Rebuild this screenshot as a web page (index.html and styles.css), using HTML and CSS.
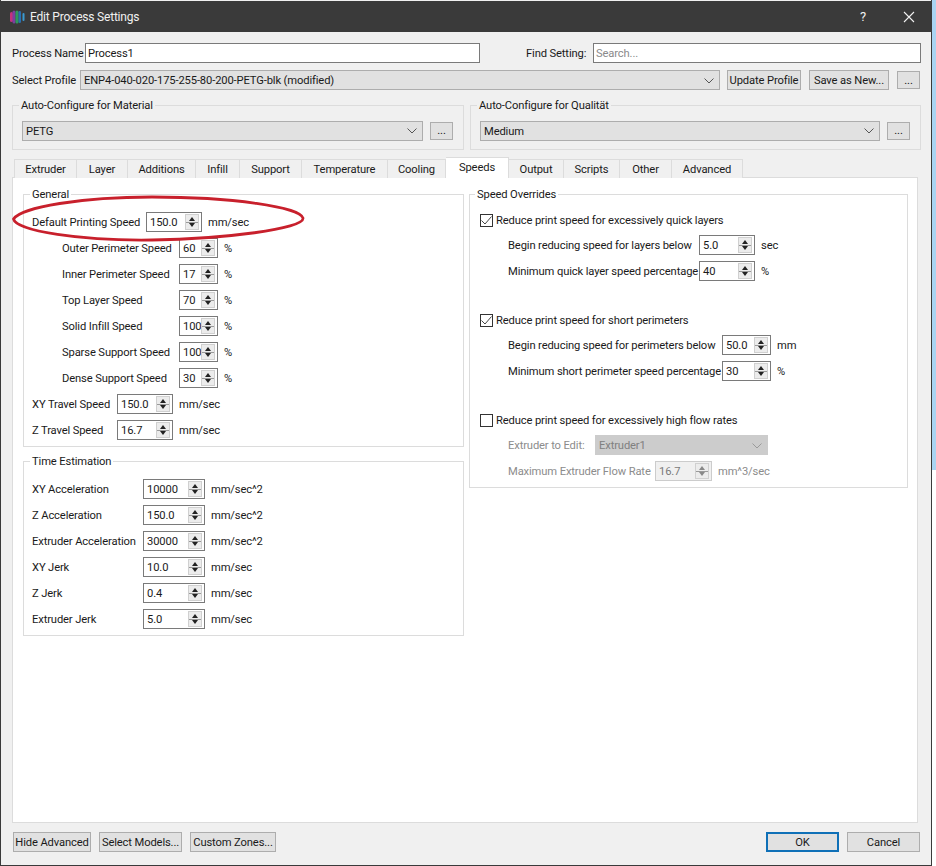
FILE: index.html
```html
<!DOCTYPE html>
<html lang="en">
<head>
    <meta charset="UTF-8">
    <meta name="viewport" content="width=device-width, initial-scale=1.0">
    <title>Edit Process Settings</title>
    <link rel="stylesheet" href="styles.css">
</head>
<body>
    <div class="window">
        <!-- Title bar -->
        <div class="titlebar">
            <svg class="app-icon" width="15" height="14" viewBox="0 0 15 14">
                <rect x="0" y="2" width="3" height="10" rx="1.5" fill="#c2337c"/>
                <rect x="2.5" y="0.5" width="3" height="13" rx="1.5" fill="#7a3fa0"/>
                <rect x="5.5" y="0.5" width="3" height="13" rx="1.5" fill="#2e9a5a"/>
                <rect x="8.5" y="1" width="2.5" height="12" rx="1.2" fill="#2a6fb0"/>
                <rect x="12.5" y="3" width="2" height="8" rx="1" fill="#3a9ad0"/>
            </svg>
            <span class="title">Edit Process Settings</span>
            <span class="help">?</span>
            <svg class="close" width="12" height="12" viewBox="0 0 12 12">
                <path d="M1 1 L11 11 M11 1 L1 11" stroke="#f2f2f2" stroke-width="1.1" fill="none"/>
            </svg>
        </div>

        <div class="client">
            <div class="top-row">
                <label class="name-label">Process Name</label>
                <div class="field name-field">Process1</div>
                <label class="find-label">Find Setting:</label>
                <div class="field find-field">Search...</div>
            </div>

            <div class="profile-row">
                <label class="profile-label">Select Profile</label>
                <div class="combo profile-combo">
                    <span>ENP4-040-020-175-255-80-200-PETG-blk (modified)</span>
                    <svg class="chev" width="10" height="6" viewBox="0 0 10 6"><path d="M0.5 0.5 L5 5 L9.5 0.5" stroke="#555" fill="none"/></svg>
                </div>
                <button class="btn update-btn">Update Profile</button>
                <button class="btn save-btn">Save as New...</button>
                <button class="btn dots">...</button>
            </div>

            <div class="auto-row">
                <fieldset class="group auto-group auto-material">
                    <legend>Auto-Configure for Material</legend>
                    <div class="combo auto-combo">
                        <span>PETG</span>
                        <svg class="chev" width="10" height="6" viewBox="0 0 10 6"><path d="M0.5 0.5 L5 5 L9.5 0.5" stroke="#555" fill="none"/></svg>
                    </div>
                    <button class="btn dots">...</button>
                </fieldset>
                <fieldset class="group auto-group auto-quality">
                    <legend>Auto-Configure for Qualität</legend>
                    <div class="combo auto-combo">
                        <span>Medium</span>
                        <svg class="chev" width="10" height="6" viewBox="0 0 10 6"><path d="M0.5 0.5 L5 5 L9.5 0.5" stroke="#555" fill="none"/></svg>
                    </div>
                    <button class="btn dots">...</button>
                </fieldset>
            </div>

            <div class="tabs">
                <div class="tab tab-extruder">Extruder</div>
                <div class="tab tab-layer">Layer</div>
                <div class="tab tab-additions">Additions</div>
                <div class="tab tab-infill">Infill</div>
                <div class="tab tab-support">Support</div>
                <div class="tab tab-temperature">Temperature</div>
                <div class="tab tab-cooling">Cooling</div>
                <div class="tab tab-speeds active">Speeds</div>
                <div class="tab tab-output">Output</div>
                <div class="tab tab-scripts">Scripts</div>
                <div class="tab tab-other">Other</div>
                <div class="tab tab-advanced">Advanced</div>
            </div>

            <div class="pane">
                <div class="col col-left">
                    <fieldset class="group general">
                        <legend>General</legend>
                        <div class="row first"><label class="w114">Default Printing Speed</label><div class="spin s56"><span>150.0</span><i class="arrows"></i></div><span class="unit">mm/sec</span></div>
                        <div class="row indent"><label class="w117">Outer Perimeter Speed</label><div class="spin s39"><span>60</span><i class="arrows"></i></div><span class="unit">%</span></div>
                        <div class="row indent"><label class="w117">Inner Perimeter Speed</label><div class="spin s39"><span>17</span><i class="arrows"></i></div><span class="unit">%</span></div>
                        <div class="row indent"><label class="w117">Top Layer Speed</label><div class="spin s39"><span>70</span><i class="arrows"></i></div><span class="unit">%</span></div>
                        <div class="row indent"><label class="w117">Solid Infill Speed</label><div class="spin s39"><span>100</span><i class="arrows"></i></div><span class="unit">%</span></div>
                        <div class="row indent"><label class="w117">Sparse Support Speed</label><div class="spin s39"><span>100</span><i class="arrows"></i></div><span class="unit">%</span></div>
                        <div class="row indent"><label class="w117">Dense Support Speed</label><div class="spin s39"><span>30</span><i class="arrows"></i></div><span class="unit">%</span></div>
                        <div class="row"><label class="w85">XY Travel Speed</label><div class="spin s56"><span>150.0</span><i class="arrows"></i></div><span class="unit">mm/sec</span></div>
                        <div class="row"><label class="w85">Z Travel Speed</label><div class="spin s56"><span>16.7</span><i class="arrows"></i></div><span class="unit">mm/sec</span></div>
                    </fieldset>

                    <fieldset class="group time">
                        <legend>Time Estimation</legend>
                        <div class="row first"><label class="w111">XY Acceleration</label><div class="spin s62"><span>10000</span><i class="arrows"></i></div><span class="unit">mm/sec^2</span></div>
                        <div class="row"><label class="w111">Z Acceleration</label><div class="spin s62"><span>150.0</span><i class="arrows"></i></div><span class="unit">mm/sec^2</span></div>
                        <div class="row"><label class="w111">Extruder Acceleration</label><div class="spin s62"><span>30000</span><i class="arrows"></i></div><span class="unit">mm/sec^2</span></div>
                        <div class="row"><label class="w111">XY Jerk</label><div class="spin s62"><span>10.0</span><i class="arrows"></i></div><span class="unit">mm/sec</span></div>
                        <div class="row"><label class="w111">Z Jerk</label><div class="spin s62"><span>0.4</span><i class="arrows"></i></div><span class="unit">mm/sec</span></div>
                        <div class="row"><label class="w111">Extruder Jerk</label><div class="spin s62"><span>5.0</span><i class="arrows"></i></div><span class="unit">mm/sec</span></div>
                    </fieldset>
                </div>

                <div class="col col-right">
                    <fieldset class="group overrides">
                        <legend>Speed Overrides</legend>

                        <div class="check-row first">
                            <span class="check on"><svg width="11" height="9" viewBox="0 0 11 9"><path d="M0.5 4.5 L4 8 L10.5 0.5" stroke="#444" fill="none"/></svg></span>
                            <label>Reduce print speed for excessively quick layers</label>
                        </div>
                        <div class="row sub"><label class="w191">Begin reducing speed for layers below</label><div class="spin s56"><span>5.0</span><i class="arrows"></i></div><span class="unit">sec</span></div>
                        <div class="row sub"><label class="w191">Minimum quick layer speed percentage</label><div class="spin s56"><span>40</span><i class="arrows"></i></div><span class="unit">%</span></div>

                        <div class="check-row">
                            <span class="check on"><svg width="11" height="9" viewBox="0 0 11 9"><path d="M0.5 4.5 L4 8 L10.5 0.5" stroke="#444" fill="none"/></svg></span>
                            <label>Reduce print speed for short perimeters</label>
                        </div>
                        <div class="row sub"><label class="w214">Begin reducing speed for perimeters below</label><div class="spin s49"><span>50.0</span><i class="arrows"></i></div><span class="unit">mm</span></div>
                        <div class="row sub"><label class="w214">Minimum short perimeter speed percentage</label><div class="spin s49"><span>30</span><i class="arrows"></i></div><span class="unit">%</span></div>

                        <div class="check-row">
                            <span class="check"></span>
                            <label>Reduce print speed for excessively high flow rates</label>
                        </div>
                        <div class="row sub off">
                            <label class="w87">Extruder to Edit:</label>
                            <div class="combo disabled-combo">
                                <span>Extruder1</span>
                                <svg class="chev" width="10" height="6" viewBox="0 0 10 6"><path d="M0.5 0.5 L5 5 L9.5 0.5" stroke="#9a9a9a" fill="none"/></svg>
                            </div>
                        </div>
                        <div class="row sub off"><label class="w147">Maximum Extruder Flow Rate</label><div class="spin s57 disabled"><span>16.7</span><i class="arrows"></i></div><span class="unit">mm^3/sec</span></div>
                    </fieldset>
                </div>
            </div>

            <div class="bottom-row">
                <button class="btn hide-btn">Hide Advanced</button>
                <button class="btn models-btn">Select Models...</button>
                <button class="btn zones-btn">Custom Zones...</button>
                <button class="btn ok-btn">OK</button>
                <button class="btn cancel-btn">Cancel</button>
            </div>
        </div>

        <!-- Red hand drawn ellipse on top of the first row -->
        <svg class="scribble" width="296" height="50" viewBox="0 0 296 50">
            <path d="M1.5 24 C10 12 70 2 140 2 C220 2 288 12 291 23 C293 34 210 44 140 45 C70 46 4 36 1.5 24 Z" fill="none" stroke="#c8202c" stroke-width="2.8"/>
        </svg>
    </div>
</body>
</html>
```

FILE: styles.css
```css
* {
    box-sizing: border-box;
}
html, body {
    margin: 0;
    padding: 0;
}
body {
    width: 936px;
    height: 866px;
    overflow: hidden;
    background: linear-gradient(#a9d4f2 0, #a9d4f2 470px, #ffffff 470px);
    font-family: Roboto, "Liberation Sans", sans-serif;
    font-size: 11.2px;
    letter-spacing: -0.13px;
    color: #1a1a1a;
    white-space: nowrap;
}
.window {
    position: relative;
    width: 932px;
    height: 866px;
    padding-top: 1px;
    border-right: 1px solid #3a3a3a;
    border-left: 1px solid #3a3a3a;
    border-bottom: 1px solid #3a3a3a;
    background: #f0f0f0;
}
.titlebar {
    display: flex;
    align-items: center;
    height: 31px;
    margin: 0 -1px;
    padding: 0 17px 0 10px;
    background: #3a3a3a;
    color: #f0f0f0;
    font-size: 12px;
    letter-spacing: -0.2px;
}
.app-icon {
    margin-right: 5px;
}
.title {
    flex: 1;
}
.help {
    margin-right: 37px;
    font-size: 13px;
}
.client {
    padding: 11px 0 0 11px;
}

/* fields and buttons */
.field {
    height: 20px;
    padding: 0 2px;
    line-height: 20px;
    background: #fff;
    border: 1px solid #7a7a7a;
}
.combo {
    display: flex;
    align-items: center;
    justify-content: space-between;
    height: 20px;
    padding: 1px 5px 0 3px;
    background: #e1e1e1;
    border: 1px solid #adadad;
}
.btn {
    height: 20px;
    padding: 1px 0 0;
    font: inherit;
    letter-spacing: inherit;
    color: inherit;
    background: #e1e1e1;
    border: 1px solid #adadad;
}
.dots {
    width: 23px;
    height: 18px;
    line-height: 12px;
}

/* top rows */
.top-row {
    display: flex;
    align-items: center;
}
.top-row label,
.profile-row label {
    padding-top: 1px;
}
.name-label {
    width: 73px;
}
.name-field {
    width: 395px;
}
.find-label {
    width: 67px;
    margin-left: 46px;
}
.find-field {
    width: 328px;
    color: #8a8a8a;
}
.profile-row {
    display: flex;
    align-items: center;
    margin-top: 7px;
}
.profile-label {
    width: 68px;
}
.profile-combo {
    width: 640px;
    margin-right: 7px;
}
.update-btn {
    width: 74px;
    margin-right: 8px;
}
.save-btn {
    width: 80px;
    margin-right: 8px;
}

/* group boxes */
.group {
    margin: 0;
    padding: 0;
    min-width: 0;
    border: 1px solid #dcdcdc;
}
.group legend {
    padding: 0 2px;
    line-height: 14px;
    transform: translateY(1px);
}
.auto-row {
    display: flex;
    margin-top: 8px;
}
.auto-group {
    display: flex;
    align-items: center;
    height: 52px;
    padding: 0 10px 0 9px;
}
.auto-group legend {
    margin-left: -3px;
}
.auto-material {
    width: 452px;
    margin-right: 6px;
}
.auto-quality {
    width: 451px;
}
.auto-combo {
    flex: 1;
    margin-right: 7px;
}

/* tabs */
.tabs {
    position: relative;
    display: flex;
    align-items: flex-end;
    height: 21px;
    margin: 7px 0 -1px 2px;
}
.tab {
    height: 19px;
    line-height: 19px;
    text-align: center;
    background: #f0f0f0;
    border: 1px solid #dcdcdc;
    border-bottom: none;
    border-left: none;
}
.tab-extruder { width: 63px; border-left: 1px solid #dcdcdc; }
.tab-layer { width: 51px; }
.tab-additions { width: 68px; }
.tab-infill { width: 44px; }
.tab-support { width: 62px; }
.tab-temperature { width: 86px; }
.tab-cooling { width: 58px; }
.tab-speeds { width: 63px; }
.tab-output { width: 55px; }
.tab-scripts { width: 56px; }
.tab-other { width: 52px; }
.tab-advanced { width: 71px; }
.tab.active {
    position: relative;
    z-index: 1;
    height: 21px;
    background: #fff;
}
.pane {
    display: flex;
    width: 906px;
    height: 646px;
    padding: 9px 0 0 10px;
    background: #fff;
    border: 1px solid #dcdcdc;
}
.col-left {
    width: 441px;
    margin-right: 5px;
}
.col-right {
    width: 439px;
}
.general {
    height: 260px;
    padding: 0 0 0 8px;
}
.time {
    height: 182px;
    margin-top: 7px;
    padding: 0 0 0 8px;
}
.general legend,
.time legend {
    margin-left: -2px;
}
.overrides {
    height: 301px;
    padding: 0 0 0 10px;
}
.overrides legend {
    margin-left: -5px;
}

/* form rows */
.row {
    display: flex;
    align-items: center;
    height: 20px;
    margin-top: 6px;
}
.row.first {
    margin-top: 11px;
}
.check-row + .row {
    margin-top: 8px;
}
.indent {
    padding-left: 30px;
}
.sub {
    padding-left: 28px;
}
.off {
    color: #8c8c8c;
}
.row label {
    flex-shrink: 0;
}
.w85 { width: 85px; }
.w87 { width: 87px; }
.w111 { width: 111px; }
.w114 { width: 114px; }
.w117 { width: 117px; }
.w147 { width: 147px; }
.w191 { width: 191px; }
.w214 { width: 214px; }
.unit {
    margin-left: 6px;
}
.spin {
    position: relative;
    flex-shrink: 0;
    height: 20px;
    padding-left: 3px;
    line-height: 19px;
    background: #fff;
    border: 1px solid #7a7a7a;
}
.s39 { width: 39px; }
.s49 { width: 49px; }
.s56 { width: 56px; }
.s57 { width: 57px; }
.s62 { width: 62px; }
.arrows {
    position: absolute;
    top: 1px;
    right: 2px;
    bottom: 1px;
    width: 14px;
    background: linear-gradient(#ececec 7px, #9a9a9a 7px, #9a9a9a 8px, #ececec 8px);
    border: 1px solid #d0d0d0;
}
.arrows::before,
.arrows::after {
    content: "";
    position: absolute;
    left: 3px;
    border-left: 3px solid transparent;
    border-right: 3px solid transparent;
}
.arrows::before {
    top: 2px;
    border-bottom: 4px solid #222;
}
.arrows::after {
    bottom: 2px;
    border-top: 4px solid #222;
}
.spin.disabled {
    color: #7a7a7a;
    background: #f0f0f0;
    border-color: #cccccc;
}
.spin.disabled .arrows::before {
    border-bottom-color: #888;
}
.spin.disabled .arrows::after {
    border-top-color: #888;
}
.disabled-combo {
    width: 173px;
    background: #cccccc;
    border-color: #cccccc;
    color: #808080;
}
.check-row {
    display: flex;
    align-items: center;
    height: 14px;
    margin-top: 32px;
}
.check-row.first {
    margin-top: 12px;
}
.check {
    display: flex;
    align-items: center;
    justify-content: center;
    width: 13px;
    height: 13px;
    margin-right: 3px;
    background: #fff;
    border: 1px solid #333;
}

/* bottom buttons */
.bottom-row {
    display: flex;
    margin-top: 9px;
    padding-left: 1px;
}
.hide-btn { width: 78px; margin-right: 8px; }
.models-btn { width: 83px; margin-right: 8px; }
.zones-btn { width: 86px; margin-right: 490px; }
.ok-btn { width: 73px; margin-right: 8px; border: 2px solid #0f70b7; }
.cancel-btn { width: 73px; }

/* annotation */
.scribble {
    position: absolute;
    top: 195px;
    left: 11px;
}
```
